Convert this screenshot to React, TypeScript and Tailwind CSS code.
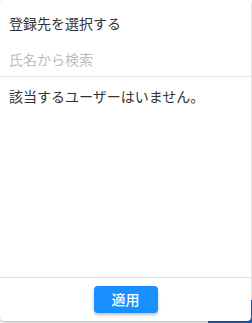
export default function App() {
  return (
    <div
      className="relative h-[323px] w-[252px] overflow-hidden bg-white"
      style={{ fontFamily: '"Noto Sans CJK JP", "Noto Sans", sans-serif' }}
    >
      {/* content peeking from behind the popover */}
      <div className="absolute left-[208px] top-[300px] h-[30px] w-[60px] bg-[#1565c0]" />

      <div className="relative flex h-[321px] w-[251px] flex-col rounded-[4px] bg-white shadow-[0_1px_3px_rgba(0,0,0,0.35)]">
        <div className="flex h-[42px] items-center px-[9px] pt-[5px] text-[14px] text-[#333]">
          登録先を選択する
        </div>
        <input
          className="h-[34px] w-full bg-transparent px-[9px] text-[14px] text-[#333] placeholder:text-[#bdbdbd] outline-none"
          placeholder="氏名から検索"
        />
        <div className="border-t border-[#e0e0e0]" />
        <div className="flex-1 px-[9px] pt-[9px] text-[14px] text-[#333]">
          該当するユーザーはいません。
        </div>
        <div className="flex h-[44px] items-center justify-center border-t border-[#e0e0e0]">
          <button
            type="button"
            className="h-[27px] w-[64px] rounded-[4px] bg-[#1890ff] text-[14px] font-medium text-white shadow-[0_2px_3px_rgba(0,0,0,0.25)]"
          >
            適用
          </button>
        </div>
      </div>
    </div>
  );
}
